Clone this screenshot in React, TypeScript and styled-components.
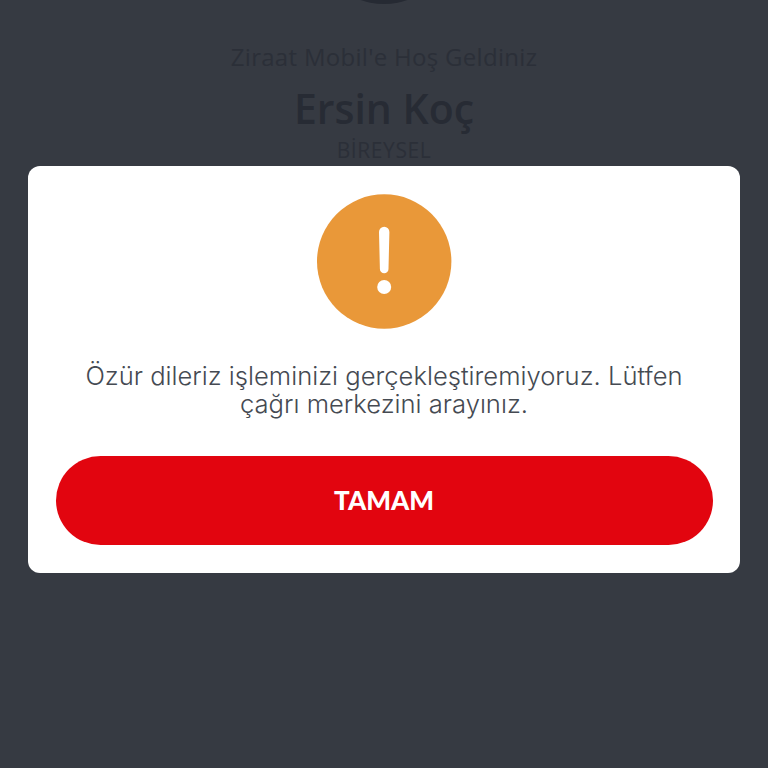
import React from 'react';
import styled, { createGlobalStyle } from 'styled-components';

const GlobalStyle = createGlobalStyle`
    html, body {
        margin: 0;
        padding: 0;
        background-color: #363a42;
    }
`;

const Screen = styled.div`
    display: flex;
    flex-direction: column;
    width: 768px;
    height: 768px;
    overflow: hidden;
    background-color: #363a42;
    font-family: "Open Sans", "Noto Sans", sans-serif;
`;

const Welcome = styled.div`
    display: flex;
    flex-direction: column;
    align-items: center;
    height: 166px;
    overflow: hidden;
    flex-shrink: 0;
`;

const Avatar = styled.div`
    width: 140px;
    height: 140px;
    margin-top: -136px;
    border-radius: 50%;
    background-color: #262a33;
`;

const Greeting = styled.div`
    margin-top: 38px;
    font-size: 24px;
    line-height: 30px;
    letter-spacing: 0.3px;
    color: #2b2f38;
`;

const UserName = styled.div`
    margin-top: 11px;
    font-size: 41px;
    line-height: 50px;
    font-weight: 600;
    color: #272b34;
`;

const UserType = styled.div`
    margin-top: 5px;
    font-size: 21px;
    line-height: 24px;
    letter-spacing: 0.6px;
    color: #2b2f38;
`;

const Modal = styled.div`
    display: flex;
    flex-direction: column;
    align-items: center;
    margin: 0 28px;
    padding: 28px 27.5px;
    background-color: #fff;
    border-radius: 12px;
`;

const AlertIcon = styled.svg`
    display: block;
    width: 135px;
    height: 135px;
`;

const Message = styled.p`
    margin: 33px 0 0;
    font-family: "Inter", "Open Sans", sans-serif;
    font-size: 25.6px;
    font-weight: 300;
    line-height: 28px;
    text-align: center;
    white-space: nowrap;
    color: #454a52;
`;

const ConfirmButton = styled.button`
    width: 100%;
    height: 89px;
    margin-top: 38px;
    padding: 0 0 2px;
    border: none;
    border-radius: 45px;
    background-color: #e2050f;
    color: #fff;
    font-family: "Lato", sans-serif;
    font-size: 26px;
    font-weight: 900;
`;

const App: React.FC = () => {
    return (
        <React.Fragment>
            <GlobalStyle />
            <Screen>
                <Welcome>
                    <Avatar />
                    <Greeting>Ziraat Mobil'e Hoş Geldiniz</Greeting>
                    <UserName>Ersin Koç</UserName>
                    <UserType>BİREYSEL</UserType>
                </Welcome>
                <Modal>
                    <AlertIcon viewBox="0 0 135 135">
                        <circle cx="67.2" cy="67.5" r="67.2" fill="#e99839" />
                        <path
                            d="M62 38a5.2 5.2 0 0 1 10.4 0l-.9 37a4.3 4.3 0 0 1-8.6 0z"
                            fill="#fff"
                        />
                        <circle cx="67.2" cy="93" r="7" fill="#fff" />
                    </AlertIcon>
                    <Message>
                        Özür dileriz işleminizi gerçekleştiremiyoruz. Lütfen
                        <br />
                        çağrı merkezini arayınız.
                    </Message>
                    <ConfirmButton>TAMAM</ConfirmButton>
                </Modal>
            </Screen>
        </React.Fragment>
    );
};

export default App;
